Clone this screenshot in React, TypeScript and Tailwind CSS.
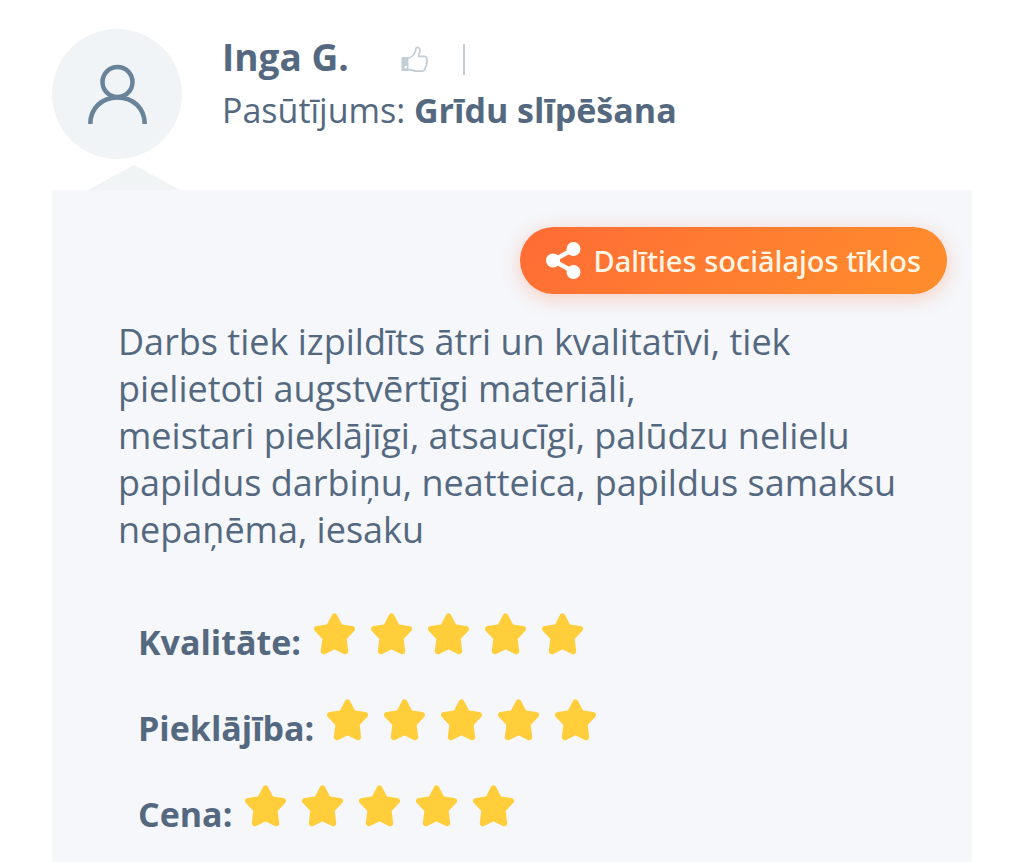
import React from 'react';

const ratings = [
    { label: 'Kvalitāte:', score: 5 },
    { label: 'Pieklājība:', score: 5 },
    { label: 'Cena:', score: 5 },
];

const UserIcon: React.FC = () => (
    <svg className="w-[60px] h-[60px]" viewBox="0 0 60 60" fill="none" stroke="#69839a" strokeWidth="4.500" aria-hidden="true">
        <circle cx="30.500" cy="18" r="15" />
        <path d="M3.300 60C3.300 44 15 33.500 30.500 33.500S57.700 44 57.700 60" />
    </svg>
);

const ThumbIcon: React.FC = () => (
    <svg className="w-[27px] h-[27px]" viewBox="0 0 27 27" fill="none" aria-hidden="true">
        <path d="M1.500 11H7.500V25H1.500Q.5 25 .5 24V12Q.5 11 1.500 11Z" fill="#c3ced6" />
        <circle cx="4.800" cy="21" r="1.300" fill="#fff" />
        <path
            d="M7.500 12C11 11.500 13 8.500 14.300 5.500L15 2.300C15.500.800 18.500 1 18.800 4C19 6.500 17.500 8.500 17.500 10.300H23.500C25.500 10.300 26.300 12 25.500 13.800C26.500 15 26.200 16.500 25.300 17.300C26 19 25.300 20.300 24.300 21C24.500 23.500 23 25.200 20 25.200H15.500C12.500 25.200 11 23.500 7.500 23.500"
            stroke="#c3ced6"
            strokeWidth="1.800"
            strokeLinejoin="round"
        />
    </svg>
);

const ShareIcon: React.FC = () => (
    <svg className="w-[35px] h-[37px] shrink-0" viewBox="0 0 35 37" fill="#fff" aria-hidden="true">
        <path d="M28 7L7 18.500L28 30" fill="none" stroke="#fff" strokeWidth="4.500" />
        <circle cx="27.500" cy="7" r="7" />
        <circle cx="7" cy="18.500" r="7" />
        <circle cx="27.500" cy="30" r="7" />
    </svg>
);

const Star: React.FC = () => (
    <svg className="w-[41px] h-[42px]" viewBox="0 0 41 42" fill="#ffce3a" aria-hidden="true">
        <path
            d="M20.500 3.500L26 14.200L38 16L29.500 25L31.200 38.200L20.500 33L9.800 38.200L11.500 25L3 16L15 14.200Z"
            stroke="#ffce3a"
            strokeWidth="6"
            strokeLinejoin="round"
        />
    </svg>
);

const App: React.FC = () => {
    return (
        <div className="min-h-screen flex flex-col bg-white px-[52px] pt-[29px] font-['Open_Sans',sans-serif] text-[#54697f]">
            <header className="flex gap-10">
                <div className="w-[130px] h-[130px] shrink-0 rounded-full bg-[#f0f4f6] flex items-center justify-center">
                    <UserIcon />
                </div>
                <div className="pt-1">
                    <div className="flex items-center">
                        <h1 className="text-[37px] leading-[48px] font-bold">Inga G.</h1>
                        <button type="button" aria-label="Patīk" className="ml-[52px] pt-1">
                            <ThumbIcon />
                        </button>
                        <span className="mt-1 ml-[35px] w-[2px] h-[31px] bg-[#c3ced6]"></span>
                    </div>
                    <p className="mt-0.5 text-[34px] leading-[54px]">
                        Pasūtījums: <strong className="font-bold">Grīdu slīpēšana</strong>
                    </p>
                </div>
            </header>

            <svg className="mt-[6px] ml-9 w-[92px] h-[25px]" viewBox="0 0 92 25" aria-hidden="true">
                <path d="M0 25L46 0L92 25Z" fill="#f0f4f4" />
            </svg>

            <main className="grow bg-[#f5f7fb] pt-[37px]">
                <div className="flex justify-end pr-[25px]">
                    <button
                        type="button"
                        className="h-[67px] px-[26px] flex items-center gap-3 rounded-full bg-linear-135 from-[#ff6b35] to-[#ff8e2b] shadow-[0_4px_20px_rgba(255,107,53,0.3)] font-['Noto_Sans',sans-serif] text-[29px] font-medium text-[#fff6e6]"
                    >
                        <ShareIcon />
                        Dalīties sociālajos tīklos
                    </button>
                </div>

                <p className="mt-6 px-[66px] text-[36px] leading-[47px]">
                    Darbs tiek izpildīts ātri un kvalitatīvi, tiek pielietoti augstvērtīgi materiāli,
                    <br />
                    meistari pieklājīgi, atsaucīgi, palūdzu nelielu papildus darbiņu, neatteica, papildus samaksu nepaņēma, iesaku
                </p>

                <ul className="mt-[60px] px-[86px] flex flex-col gap-11">
                    {ratings.map((rating) => (
                        <li key={rating.label} className="flex items-start gap-[13px]">
                            <span className="pt-2 h-[42px] text-[34px] leading-[42px] font-bold">{rating.label}</span>
                            <span className="flex gap-4" role="img" aria-label={`${rating.score} no 5`}>
                                {Array.from({ length: rating.score }, (_, i) => (
                                    <Star key={i} />
                                ))}
                            </span>
                        </li>
                    ))}
                </ul>
            </main>
        </div>
    );
};

export default App;
